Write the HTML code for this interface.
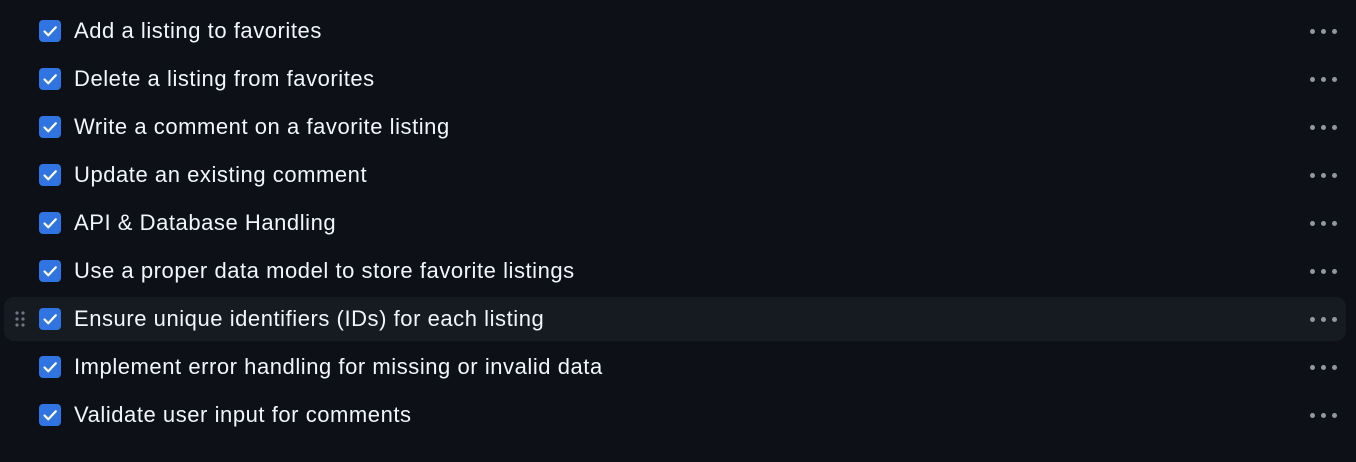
<!DOCTYPE html><html><head><style>
body{margin:0;background:#0d1117;width:1356px;height:462px;overflow:hidden;font-family:"Liberation Sans",sans-serif}
.r{position:absolute;left:4px;width:1342px;height:44px;border-radius:10px}
.r.h{background:#161b22}
.cb{position:absolute;left:35px;top:11px;width:22px;height:22px;background:#2f74e0;border-radius:4px}
.t{position:absolute;left:70px;top:0;line-height:44px;font-size:22px;letter-spacing:0.55px;color:#f0f6fc}
.d{position:absolute;right:7px;top:20px;width:29px;height:5px}
.d i{position:absolute;top:0;width:5px;height:5px;border-radius:50%;background:#9198a1}
.g{position:absolute;left:11px;top:14px}
</style></head><body>
<div id="c"></div>
<script>
const items=["Add a listing to favorites","Delete a listing from favorites","Write a comment on a favorite listing","Update an existing comment","API &amp; Database Handling","Use a proper data model to store favorite listings","Ensure unique identifiers (IDs) for each listing","Implement error handling for missing or invalid data","Validate user input for comments"];
let h="";items.forEach((t,i)=>{const y=9+i*48;const hl=i==6;
h+=`<div class="r${hl?' h':''}" style="top:${y}px">${hl?'<svg class="g" width="10" height="16"><g fill="#6e7681"><circle cx="2" cy="2" r="1.6"/><circle cx="8" cy="2" r="1.6"/><circle cx="2" cy="8" r="1.6"/><circle cx="8" cy="8" r="1.6"/><circle cx="2" cy="14" r="1.6"/><circle cx="8" cy="14" r="1.6"/></g></svg>':''}<div class="cb"><svg width="22" height="22"><path d="M5.5 11.5l3.8 3.8 7.5-8" fill="none" stroke="#fff" stroke-width="2.2" stroke-linecap="round" stroke-linejoin="round"/></svg></div><div class="t">${t}</div><div class="d"><i style="left:0"></i><i style="left:11px"></i><i style="left:22px"></i></div></div>`});
document.getElementById("c").innerHTML=h;
</script></body></html>
